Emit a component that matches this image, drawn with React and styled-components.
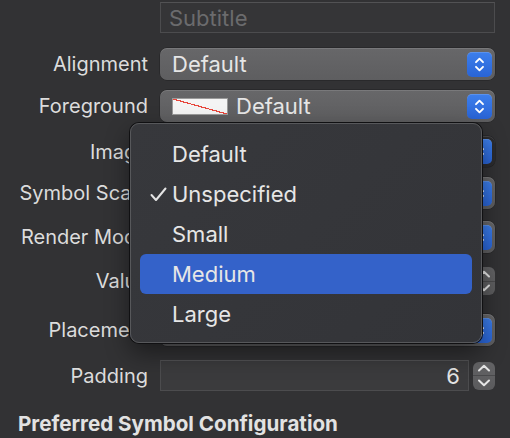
import React from "react";
import styled, { createGlobalStyle } from "styled-components";

const GlobalStyle = createGlobalStyle`
  html, body {
    margin: 0;
    background: #323234;
  }
  body {
    font-family: Inter, "Noto Sans", sans-serif;
    -webkit-font-smoothing: antialiased;
  }
`;

// values of the rows that sit under the open menu are not visible, so they stay empty
const rows = [
  { id: "image", label: "Image", kind: "popup", mt: 14, h: 31, dark: true },
  { id: "scale", label: "Symbol Scale", kind: "popup", mt: 10, h: 32 },
  { id: "render", label: "Render Mode", kind: "popup", mt: 12, h: 32 },
  { id: "value", label: "Value", kind: "number", mt: 12, h: 32 },
  { id: "place", label: "Placement", kind: "popup", mt: 17, h: 32 },
  { id: "padding", label: "Padding", kind: "number", value: "6", mt: 14, h: 31 },
];

const menuItems = ["Default", "Unspecified", "Small", "Medium", "Large"];

const Chevrons = () => (
  <svg width="11" height="17" viewBox="0 0 11 17" fill="none">
    <path d="M2 6.2 L5.5 2.7 L9 6.2" stroke="#fff" strokeWidth="1.9" strokeLinecap="round" strokeLinejoin="round" />
    <path d="M2 10.8 L5.5 14.3 L9 10.8" stroke="#fff" strokeWidth="1.9" strokeLinecap="round" strokeLinejoin="round" />
  </svg>
);

const Check = () => (
  <svg width="17" height="15" viewBox="0 0 17 15" fill="none">
    <path d="M1.5 8 L6 13 L15.5 1.5" stroke="#e4e4e4" strokeWidth="2" strokeLinecap="round" strokeLinejoin="round" />
  </svg>
);

const PopupButton = ({ value, swatch, dark }) => (
  <Popup $dark={dark}>
    {swatch && <Swatch />}
    <PopupValue>{value}</PopupValue>
    <ArrowButton>
      <Chevrons />
    </ArrowButton>
  </Popup>
);

const NumberField = ({ value }) => (
  <NumberWrap>
    <TextField $align="right">{value}</TextField>
    <Stepper>
      <StepHalf>
        <svg width="14" height="8" viewBox="0 0 14 8" fill="none">
          <path d="M2 6.5 L7 1.8 L12 6.5" stroke="#e6e6e6" strokeWidth="2" strokeLinecap="round" strokeLinejoin="round" />
        </svg>
      </StepHalf>
      <StepHalf $bottom>
        <svg width="14" height="8" viewBox="0 0 14 8" fill="none">
          <path d="M2 1.5 L7 6.2 L12 1.5" stroke="#e6e6e6" strokeWidth="2" strokeLinecap="round" strokeLinejoin="round" />
        </svg>
      </StepHalf>
    </Stepper>
  </NumberWrap>
);

const App = () => (
  <>
    <GlobalStyle />
    <Panel>
      <Row $mt={2} $h={31}>
        <span />
        <TextField $placeholder>Subtitle</TextField>
      </Row>
      <Row $mt={15} $h={32}>
        <Label>Alignment</Label>
        <PopupButton value="Default" />
      </Row>
      <Row $mt={10} $h={32}>
        <Label>Foreground</Label>
        <PopupButton value="Default" swatch />
      </Row>
      {rows.map(row => (
        <Row key={row.id} $mt={row.mt} $h={row.h}>
          <Label>{row.label}</Label>
          {row.kind === "popup"
            ? <PopupButton value={row.value} dark={row.dark} />
            : <NumberField value={row.value} />}
        </Row>
      ))}
      <SectionTitle>Preferred Symbol Configuration</SectionTitle>

      <Menu>
        {menuItems.map(item => (
          <MenuItem key={item} $active={item === "Medium"}>
            {item === "Unspecified" && <CheckMark><Check /></CheckMark>}
            {item}
          </MenuItem>
        ))}
      </Menu>
    </Panel>
  </>
);

export default App;

const Panel = styled.div`
  position: relative;
  width: 510px;
  height: 438px;
  overflow: hidden;
  display: flex;
  flex-direction: column;
  padding-right: 15px;
  box-sizing: border-box;
  background: #323234;
`;

const Row = styled.div`
  display: grid;
  grid-template-columns: 148px 1fr;
  column-gap: 12px;
  align-items: center;
  margin-top: ${p => p.$mt}px;
  height: ${p => p.$h}px;
  flex-shrink: 0;
`;

const Label = styled.div`
  justify-self: end;
  white-space: nowrap;
  font-size: 20px;
  color: #dcdcdc;
`;

const TextField = styled.div`
  height: 100%;
  box-sizing: border-box;
  display: flex;
  align-items: center;
  justify-content: ${p => (p.$align === "right" ? "flex-end" : "flex-start")};
  padding: 0 8px;
  background: ${p => (p.$placeholder ? "#353537" : "#3b3b3d")};
  border: 1px solid #4c4c4e;
  border-top-color: #525254;
  font-size: 22px;
  color: ${p => (p.$placeholder ? "#6b6b6d" : "#e4e4e4")};
`;

const Popup = styled.div`
  height: 100%;
  box-sizing: border-box;
  display: flex;
  align-items: center;
  gap: 8px;
  padding: 0 3px 0 12px;
  border-radius: 7px;
  background: ${p => (p.$dark ? "#2c2c2e" : "linear-gradient(#676769, #5e5e60)")};
  box-shadow: inset 0 1px 0 rgba(255, 255, 255, 0.12), 0 0 0 0.5px rgba(0, 0, 0, 0.35);
`;

const Swatch = styled.div`
  width: 56px;
  height: 17px;
  flex-shrink: 0;
  box-sizing: border-box;
  border: 1px solid #9a9a9a;
  background: linear-gradient(
    to top right,
    #f4f4f4 calc(50% - 0.6px),
    #e8463c calc(50% - 0.6px),
    #e8463c calc(50% + 0.6px),
    #f4f4f4 calc(50% + 0.6px)
  );
`;

const PopupValue = styled.div`
  flex: 1;
  font-size: 22px;
  color: #e6e6e6;
  white-space: nowrap;
  overflow: hidden;
`;

const ArrowButton = styled.div`
  width: 25px;
  height: 25px;
  flex-shrink: 0;
  border-radius: 5px;
  display: flex;
  align-items: center;
  justify-content: center;
  background: linear-gradient(#3d7fec, #2964d6);
  box-shadow: inset 0 0.5px 0 rgba(255, 255, 255, 0.3);
`;

const NumberWrap = styled.div`
  height: 100%;
  display: grid;
  grid-template-columns: 1fr 22px;
  column-gap: 4px;
  align-items: center;
`;

const Stepper = styled.div`
  height: 28px;
  border-radius: 6px;
  background: linear-gradient(#646466, #5b5b5d);
  display: flex;
  flex-direction: column;
  overflow: hidden;
`;

const StepHalf = styled.div`
  flex: 1;
  display: flex;
  align-items: center;
  justify-content: center;
  border-top: ${p => (p.$bottom ? "1px solid #4a4a4c" : "none")};
`;

const SectionTitle = styled.div`
  margin-top: 20px;
  padding-left: 18px;
  font-size: 20.6px;
  font-weight: 700;
  color: #e2e2e2;
  white-space: nowrap;
`;

const Menu = styled.div`
  position: absolute;
  left: 130px;
  top: 123px;
  width: 352px;
  height: 220px;
  box-sizing: border-box;
  padding: 10px 9px 0;
  border-radius: 9px;
  background: linear-gradient(135deg, #37383c, #333438);
  border: 1px solid #57585b;
  box-shadow: 0 0 0 1px #101012, 0 10px 24px rgba(0, 0, 0, 0.45);
`;

const MenuItem = styled.div`
  position: relative;
  height: 40px;
  display: flex;
  align-items: center;
  padding-left: 32px;
  border-radius: 6px;
  font-size: 22px;
  color: #e6e6e6;
  background: ${p => (p.$active ? "#3462c9" : "transparent")};
`;

const CheckMark = styled.span`
  position: absolute;
  left: 10px;
  top: 13px;
  display: flex;
`;
